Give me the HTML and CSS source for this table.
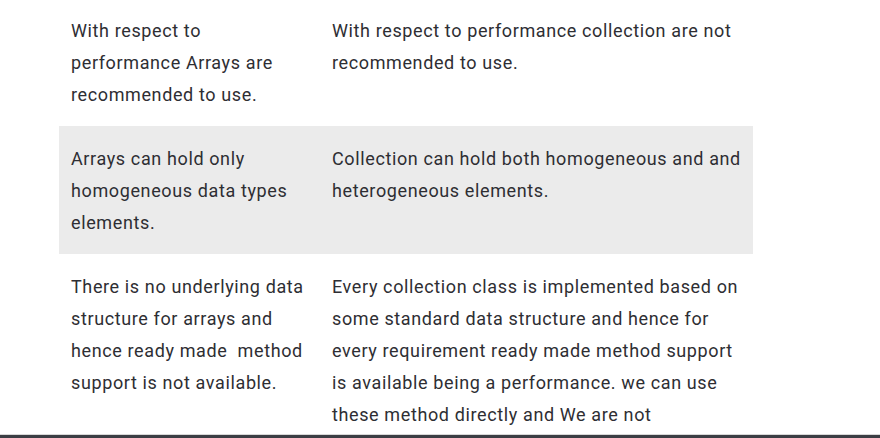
FILE: index.html
```html
<!DOCTYPE html>
<html>
<head>
<meta charset="utf-8">
<link rel="stylesheet" href="styles.css">
</head>
<body>
<div class="page">
  <table class="compare">
    <tr>
      <td class="c1">With respect to performance Arrays are recommended to use.</td>
      <td class="c2">With respect to performance collection are not recommended to use.</td>
    </tr>
    <tr class="alt">
      <td class="c1">Arrays can hold only homogeneous data types elements.</td>
      <td class="c2">Collection can hold both homogeneous and and heterogeneous elements.</td>
    </tr>
    <tr>
      <td class="c1">There is no underlying data structure for arrays and hence ready made&nbsp; method support is not available.</td>
      <td class="c2">Every collection class is implemented based on some standard data structure and hence for every requirement ready made method support is available being a performance. we can use these method directly and We are not</td>
    </tr>
  </table>
</div>
<div class="bottombar"></div>
</body>
</html>
```
FILE: styles.css
```css
html, body {
  margin: 0;
  padding: 0;
  background: #fff;
  overflow: hidden;
  height: 438px;
}
.page {
  padding-left: 59px;
  margin-top: -2px;
  height: 438px;
}
.compare {
  border-collapse: collapse;
  width: 694px;
  font-family: Roboto, "Liberation Sans", sans-serif;
  font-size: 18px;
  line-height: 32px;
  letter-spacing: 0.62px;
  color: #2e2e33;
}
.compare td {
  vertical-align: top;
  padding: 17px 12px 15px;
}
.compare .c1 { width: 237px; }
.alt td { background: #ebebeb; }
.bottombar {
  position: fixed;
  left: 0;
  right: 0;
  bottom: 0;
  height: 3px;
  background: #3b3e44;
  border-top: 1px solid #d8d8d8;
}
```
